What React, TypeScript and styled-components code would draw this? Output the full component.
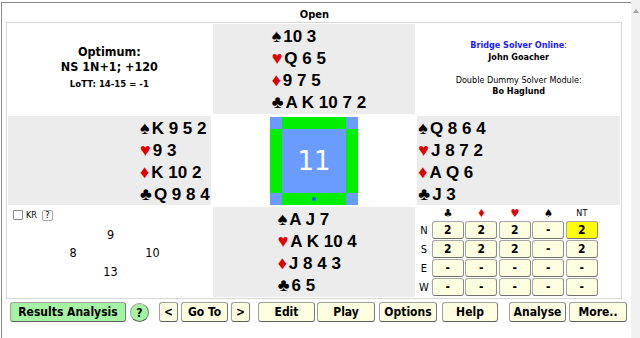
import React from 'react';
import styled, { createGlobalStyle } from 'styled-components';

const Global = createGlobalStyle`
  html, body { margin: 0; padding: 0; background: #fff; }
  body {
    width: 640px; height: 338px; overflow: hidden;
    font-family: "DejaVu Sans Condensed", "DejaVu Sans", sans-serif;
    font-stretch: condensed;
    color: #000;
  }
`;

const Page = styled.div`
  display: flex;
  width: 640px;
  height: 338px;
`;

const Frame = styled.div`
  flex: 1;
  margin: 2px 0 0 1px;
  border-top: 1px solid #8a8a8a;
  border-left: 1px solid #8a8a8a;
  display: flex;
  flex-direction: column;
`;

const ScrollBar = styled.div`
  width: 9px;
  background: #f1f1f1;
  display: flex;
  justify-content: center;
  padding-top: 9px;
  box-sizing: border-box;
`;

const Arrow = styled.span`
  width: 0;
  height: 0;
  border-left: 3px solid transparent;
  border-right: 3px solid transparent;
  border-bottom: 4px solid #a3a3a3;
`;

const Title = styled.div`
  padding-top: 5px;
  line-height: 14px;
  height: 14px;
  font-size: 11px;
  font-weight: bold;
  text-align: center;
  padding-right: 4px;
`;

const Board = styled.div`
  margin-left: 4px;
  width: 616px;
  box-sizing: border-box;
  border: 1px solid #d6d6d6;
  padding: 1px;
  display: grid;
  grid-template-columns: repeat(3, 1fr);
  grid-template-rows: 90px 89px 90px;
  gap: 2px;
`;

const Cell = styled.div<{ $shade?: boolean }>`
  background: ${p => (p.$shade ? '#ececec' : '#fff')};
  min-width: 0;
  overflow: hidden;
`;

const HandBox = styled.div<{ $justify: string; $pad: string }>`
  height: 100%;
  box-sizing: border-box;
  display: flex;
  align-items: center;
  justify-content: ${p => p.$justify};
  padding: ${p => p.$pad};
`;

const HandLines = styled.div`
  font-family: "Liberation Sans", Arial, sans-serif;
  font-stretch: normal;
  font-weight: bold;
  font-size: 17px;
  line-height: 22px;
  white-space: pre;
`;

const HandRow = styled.div`
  height: 22px;
  display: flex;
  align-items: baseline;
`;

const Suit = styled.span<{ $red?: boolean }>`
  color: ${p => (p.$red ? '#e00000' : '#000')};
  font-size: 18px;
  line-height: 22px;
  margin-right: 2px;
`;

const InfoBox = styled.div`
  height: 100%;
  display: flex;
  flex-direction: column;
  align-items: center;
  justify-content: center;
  text-align: center;
`;

const OptLine = styled.div<{ $size: number; $lh: number }>`
  font-weight: bold;
  font-size: ${p => p.$size}px;
  line-height: ${p => p.$lh}px;
`;

const Credit = styled.div<{ $bold?: boolean }>`
  font-size: 9px;
  line-height: 11.5px;
  min-height: 11.5px;
  font-weight: ${p => (p.$bold ? 'bold' : 'normal')};
`;

const Blue = styled.span`
  color: #1a1aff;
  font-weight: bold;
`;

const Compass = styled.div`
  display: grid;
  grid-template-columns: 12px 64px 12px;
  grid-template-rows: 12px 64px 12px;
  width: 88px;
  height: 88px;
`;

const Corner = styled.div`
  background: #6a9cff;
`;

const Side = styled.div`
  background: #00ee00;
  display: flex;
  align-items: center;
  justify-content: center;
`;

const Dot = styled.span`
  width: 4px;
  height: 4px;
  border-radius: 50%;
  background: #0a5cff;
`;

const Tricks = styled.div`
  background: #6a9cff;
  color: #fff;
  font-family: "DejaVu Sans", sans-serif;
  font-stretch: normal;
  font-size: 26px;
  display: flex;
  align-items: center;
  justify-content: center;
`;

const LeadCell = styled.div`
  padding: 3px 5px;
`;

const KrRow = styled.div`
  display: flex;
  align-items: center;
  height: 10px;
  font-size: 9px;
  gap: 3px;
`;

const CheckBox = styled.span`
  width: 8px;
  height: 8px;
  border: 1px solid #8a8a8a;
  border-radius: 1px;
  background: #fff;
`;

const HelpBox = styled.span`
  margin-left: 2px;
  width: 11px;
  height: 11px;
  box-sizing: border-box;
  border: 1px solid #a8a8a8;
  border-radius: 2px;
  background: #f8f8f8;
  font-size: 9px;
  line-height: 9px;
  text-align: center;
`;

const LeadGrid = styled.div`
  margin: 5px 0 0 40px;
  display: grid;
  grid-template-columns: 40px 35px 49px;
  grid-template-rows: 18px 19px 19px;
  font-size: 12.5px;
  align-items: center;
  justify-items: center;
`;

const TrickTable = styled.div`
  display: grid;
  grid-template-columns: 13px repeat(5, 32px);
  grid-template-rows: 13px repeat(4, 18px);
  column-gap: 1.5px;
  row-gap: 1px;
  align-items: center;
  justify-items: center;
`;

const HeadSuit = styled.span<{ $red?: boolean }>`
  color: ${p => (p.$red ? '#e00000' : '#000')};
  font-family: "DejaVu Sans", sans-serif;
  font-size: 11px;
  line-height: 13px;
`;

const HeadText = styled.span`
  font-size: 9px;
  line-height: 13px;
`;

const SeatLabel = styled.span`
  font-size: 11px;
`;

const TrickBtn = styled.div<{ $hi?: boolean }>`
  width: 32px;
  height: 18px;
  box-sizing: border-box;
  background: ${p => (p.$hi ? '#ffff00' : '#fdfde0')};
  border: 1px solid #a6a6a6;
  border-bottom-color: #707070;
  border-right-color: #8c8c8c;
  border-radius: 3px;
  font-weight: bold;
  font-size: 12px;
  line-height: 16px;
  text-align: center;
`;

const Toolbar = styled.div`
  display: flex;
  align-items: center;
  margin: 3px 0 0 8px;
  height: 20px;
`;

const ToolBtn = styled.div<{ $w: number; $gap: number; $green?: boolean; $round?: boolean }>`
  width: ${p => p.$w}px;
  margin-left: ${p => p.$gap}px;
  height: ${p => (p.$round ? 19 : 20)}px;
  box-sizing: border-box;
  background: ${p => (p.$green ? '#a4f4a4' : '#fdfde0')};
  border: 1px solid #a0a0a0;
  border-bottom-color: #5c5c5c;
  border-right-color: #7a7a7a;
  border-radius: ${p => (p.$round ? '50%' : '3px')};
  font-weight: bold;
  font-size: 12px;
  line-height: 18px;
  text-align: center;
  white-space: nowrap;
`;

type Line = { s: string; red?: boolean; cards: string };
const mk = (a: string, b: string, c: string, d: string): Line[] => [
  { s: '♠', cards: a },
  { s: '♥', red: true, cards: b },
  { s: '♦', red: true, cards: c },
  { s: '♣', cards: d },
];

const Hand: React.FC<{ lines: Line[]; justify: string; pad: string }> = ({ lines, justify, pad }) => (
  <HandBox $justify={justify} $pad={pad}>
    <HandLines>
      {lines.map((l, i) => (
        <HandRow key={i}>
          <Suit $red={l.red}>{l.s}</Suit>
          <span>{l.cards}</span>
        </HandRow>
      ))}
    </HandLines>
  </HandBox>
);

const rows: { seat: string; vals: string[] }[] = [
  { seat: 'N', vals: ['2', '2', '2', '-', '2'] },
  { seat: 'S', vals: ['2', '2', '2', '-', '2'] },
  { seat: 'E', vals: ['-', '-', '-', '-', '-'] },
  { seat: 'W', vals: ['-', '-', '-', '-', '-'] },
];

const buttons = [
  { t: 'Results Analysis', w: 116, g: 0, green: true },
  { t: '?', w: 19, g: 4, green: true, round: true },
  { t: '<', w: 19, g: 10 },
  { t: 'Go To', w: 47, g: 3 },
  { t: '>', w: 19, g: 3 },
  { t: 'Edit', w: 57, g: 8 },
  { t: 'Play', w: 58, g: 2 },
  { t: 'Options', w: 58, g: 4 },
  { t: 'Help', w: 56, g: 5 },
  { t: 'Analyse', w: 57, g: 11 },
  { t: 'More..', w: 58, g: 3 },
];

export default function App() {
  return (
    <>
      <Global />
      <Page>
        <Frame>
          <Title>Open</Title>
          <Board>
            <Cell>
              <InfoBox>
                <OptLine $size={12.5} $lh={15}>Optimum:</OptLine>
                <OptLine $size={12.5} $lh={15}>NS 1N+1; +120</OptLine>
                <OptLine $size={9.5} $lh={20}>LoTT: 14-15 = -1</OptLine>
              </InfoBox>
            </Cell>
            <Cell $shade>
              <Hand lines={mk('10 3', 'Q 6 5', '9 7 5', 'A K 10 7 2')} justify="flex-start" pad="0 0 0 59px" />
            </Cell>
            <Cell>
              <InfoBox>
                <Credit><Blue>Bridge Solver Online</Blue>:</Credit>
                <Credit $bold>John Goacher</Credit>
                <Credit />
                <Credit>Double Dummy Solver Module:</Credit>
                <Credit $bold>Bo Haglund</Credit>
              </InfoBox>
            </Cell>

            <Cell $shade>
              <Hand lines={mk('K 9 5 2', '9 3', 'K 10 2', 'Q 9 8 4')} justify="flex-end" pad="0 1px 0 0" />
            </Cell>
            <Cell>
              <HandBox $justify="center" $pad="0">
                <Compass>
                  <Corner />
                  <Side />
                  <Corner />
                  <Side />
                  <Tricks>11</Tricks>
                  <Side />
                  <Corner />
                  <Side><Dot /></Side>
                  <Corner />
                </Compass>
              </HandBox>
            </Cell>
            <Cell $shade>
              <Hand lines={mk('Q 8 6 4', 'J 8 7 2', 'A Q 6', 'J 3')} justify="flex-start" pad="0 0 0 1px" />
            </Cell>

            <Cell>
              <LeadCell>
                <KrRow>
                  <CheckBox />
                  <span>KR</span>
                  <HelpBox>?</HelpBox>
                </KrRow>
                <LeadGrid>
                  <span />
                  <span>9</span>
                  <span />
                  <span>8</span>
                  <span />
                  <span>10</span>
                  <span />
                  <span>13</span>
                  <span />
                </LeadGrid>
              </LeadCell>
            </Cell>
            <Cell $shade>
              <Hand lines={mk('A J 7', 'A K 10 4', 'J 8 4 3', '6 5')} justify="flex-start" pad="0 0 0 65px" />
            </Cell>
            <Cell>
              <TrickTable>
                <span />
                <HeadSuit>♣</HeadSuit>
                <HeadSuit $red>♦</HeadSuit>
                <HeadSuit $red>♥</HeadSuit>
                <HeadSuit>♠</HeadSuit>
                <HeadText>NT</HeadText>
                {rows.map(r => (
                  <React.Fragment key={r.seat}>
                    <SeatLabel>{r.seat}</SeatLabel>
                    {r.vals.map((v, i) => (
                      <TrickBtn key={i} $hi={r.seat === 'N' && i === 4}>{v}</TrickBtn>
                    ))}
                  </React.Fragment>
                ))}
              </TrickTable>
            </Cell>
          </Board>
          <Toolbar>
            {buttons.map(b => (
              <ToolBtn key={b.t} $w={b.w} $gap={b.g} $green={b.green} $round={b.round}>{b.t}</ToolBtn>
            ))}
          </Toolbar>
        </Frame>
        <ScrollBar><Arrow /></ScrollBar>
      </Page>
    </>
  );
}
